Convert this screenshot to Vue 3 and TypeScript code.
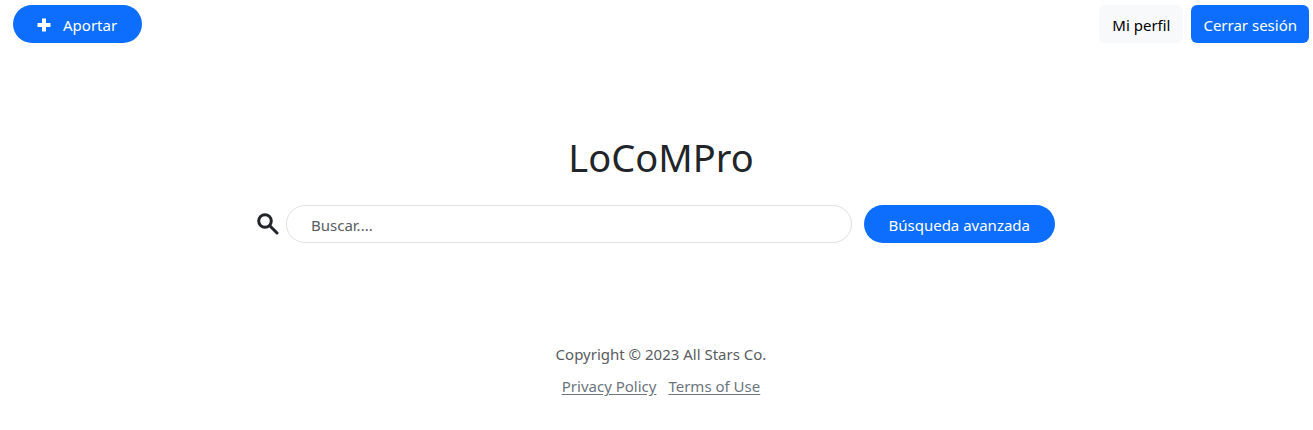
<script setup lang="ts">
import { ref } from 'vue'

const query = ref('')
</script>

<template>
  <div class="page">
    <header class="topbar">
      <button type="button" class="btn primary pill">
        <svg class="plus" viewBox="0 0 14 14" aria-hidden="true">
          <path d="M5 .5h4V5h4.500v4H9v4.500H5V9H.5V5H5z" />
        </svg>
        <span>Aportar</span>
      </button>
      <nav class="account">
        <button type="button" class="btn light">Mi perfil</button>
        <button type="button" class="btn primary">Cerrar sesión</button>
      </nav>
    </header>

    <main>
      <h1>LoCoMPro</h1>
      <form class="search" role="search" @submit.prevent>
        <label for="query" aria-label="Buscar">
          <svg class="lens" viewBox="0 0 22 22" aria-hidden="true">
            <circle cx="8" cy="8" r="6.3" />
            <path d="M12.800 12.800L20 20" />
          </svg>
        </label>
        <input id="query" v-model="query" type="text" placeholder="Buscar...." />
        <button type="button" class="btn primary pill advanced">Búsqueda avanzada</button>
      </form>
    </main>

    <footer>
      <p>Copyright © 2023 All Stars Co.</p>
      <div class="links">
        <a href="#privacy">Privacy Policy</a>
        <a href="#terms">Terms of Use</a>
      </div>
    </footer>
  </div>
</template>

<style>
body {
  margin: 0;
  background: #fff;
}
</style>

<style scoped>
.page {
  box-sizing: border-box;
  padding: 5px 4px 16px 13px;
  font-family: "Segoe UI", "Noto Sans", sans-serif;
  font-size: 15px;
  line-height: 24px;
  color: #212529;
}

.topbar,
.account,
.search,
.links {
  display: flex;
  align-items: center;
}

.topbar {
  justify-content: space-between;
}

.account {
  gap: 8px;
}

.btn {
  box-sizing: border-box;
  height: 38px;
  padding: 1px 11px 0;
  border: 1px solid transparent;
  border-radius: 6px;
  font: inherit;
  white-space: nowrap;
  cursor: pointer;
}

.primary {
  background: #0d6efd;
  color: #fff;
}

.light {
  min-width: 84px;
  background: #f8f9fa;
  color: #000;
}

.pill {
  display: flex;
  align-items: center;
  justify-content: center;
  gap: 12px;
  padding: 1px 24px 0 23px;
  border-radius: 19px;
}

.plus {
  width: 14px;
  height: 14px;
  fill: #fff;
}

h1 {
  margin: 90px 0 24px;
  font-size: 38px;
  font-weight: 400;
  line-height: 48px;
  text-align: center;
}

.search {
  max-width: 798px;
  margin: 0 auto;
  padding-right: 10px;
}

.search label {
  display: flex;
  margin-right: 7px;
}

.lens {
  width: 22px;
  height: 22px;
  fill: none;
  stroke: #212529;
  stroke-width: 3;
  stroke-linecap: round;
}

input {
  box-sizing: border-box;
  flex: 1;
  min-width: 0;
  height: 38px;
  padding: 1px 24px 0;
  border: 1px solid #dee2e6;
  border-radius: 19px;
  background: #fff;
  color: #212529;
  font: inherit;
}

input::placeholder {
  color: #595c5f;
  opacity: 1;
}

.advanced {
  margin-left: 12px;
}

footer {
  margin-top: 99px;
  text-align: center;
  color: #595c5f;
}

footer p {
  margin: 0 0 8px;
}

.links {
  justify-content: center;
  gap: 12px;
}

.links a {
  color: #6c757d;
  text-underline-offset: 2px;
}
</style>
